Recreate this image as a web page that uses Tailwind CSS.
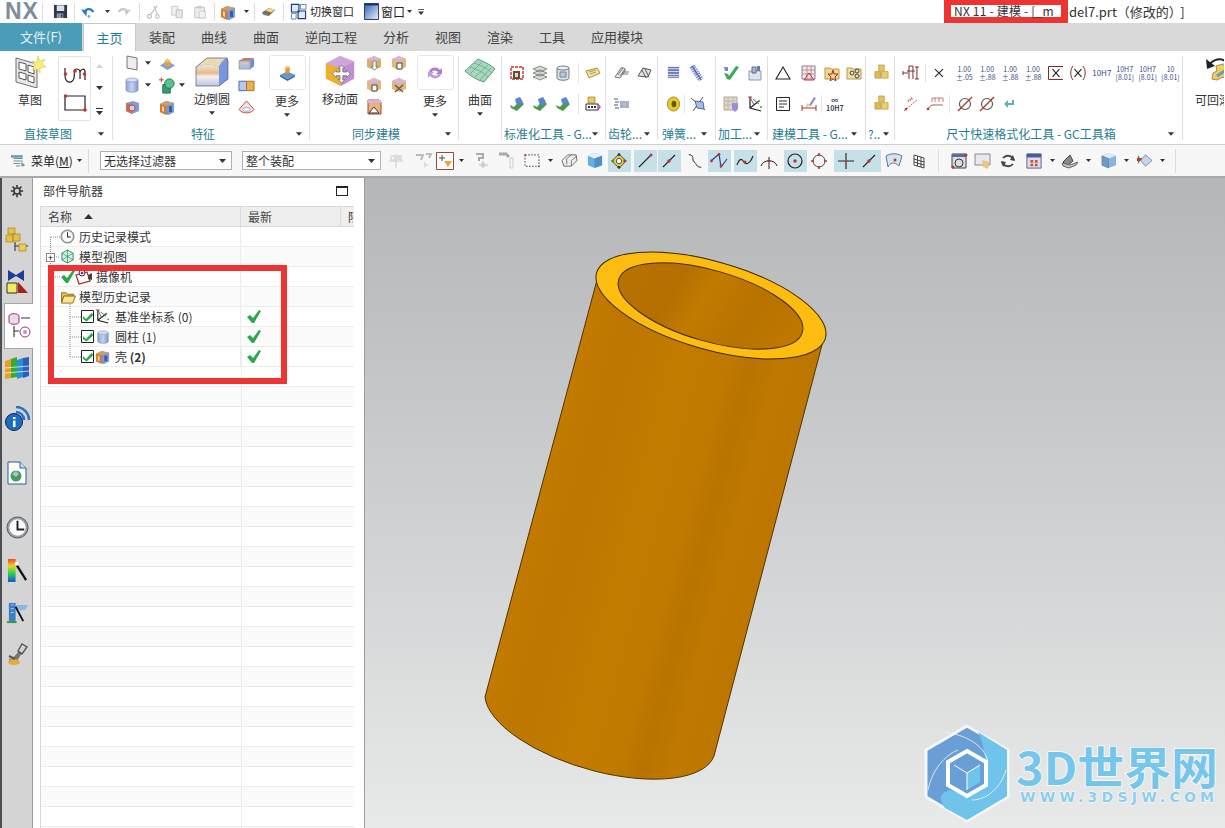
<!DOCTYPE html>
<html lang="zh-CN">
<head>
<meta charset="UTF-8">
<title>NX 11 - 建模</title>
<script src="https://cdn.jsdelivr.net/npm/@tailwindcss/browser@4"></script>
</head>
<body class="w-[1225px] h-[828px] overflow-hidden bg-white text-[12px] text-[#333] font-['Noto_Sans_CJK_SC','Microsoft_YaHei',sans-serif]">

<!-- icon sheet -->
<svg width="0" height="0" class="absolute">
  <defs>
    <linearGradient id="gBlue" x1="0" x2="1"><stop offset="0" stop-color="#8fa6d8"/><stop offset=".5" stop-color="#c6d3ee"/><stop offset="1" stop-color="#7f96cc"/></linearGradient>
    <linearGradient id="gWin" x1="0" y1="0" x2="1" y2="1"><stop offset="0" stop-color="#2f5fb0"/><stop offset="1" stop-color="#eef3fb"/></linearGradient>
    <linearGradient id="gHeat" x1="0" y1="0" x2="0" y2="1"><stop offset="0" stop-color="#e8452c"/><stop offset=".3" stop-color="#f1d21e"/><stop offset=".6" stop-color="#2ed84a"/><stop offset="1" stop-color="#1450d8"/></linearGradient>
    <linearGradient id="gFace" x1="0" y1="0" x2="0" y2="1"><stop offset="0" stop-color="#efe6da"/><stop offset=".4" stop-color="#e9b98a"/><stop offset=".55" stop-color="#f4f0ea"/><stop offset="1" stop-color="#b8c6e8"/></linearGradient>
    <linearGradient id="gBody" gradientUnits="userSpaceOnUse" x1="597" y1="283" x2="823" y2="343">
      <stop offset="0" stop-color="#c27a00"/><stop offset=".18" stop-color="#bd7600"/><stop offset=".3" stop-color="#c07900"/>
      <stop offset=".42" stop-color="#c37c00"/><stop offset=".62" stop-color="#c17a00"/><stop offset=".72" stop-color="#b87300"/>
      <stop offset=".84" stop-color="#bf7900"/><stop offset="1" stop-color="#bd7700"/>
    </linearGradient>
    <linearGradient id="gBore" gradientUnits="userSpaceOnUse" x1="618" y1="280" x2="803" y2="330">
      <stop offset="0" stop-color="#b87200"/><stop offset=".3" stop-color="#b46f00"/><stop offset=".45" stop-color="#c27b00"/>
      <stop offset=".7" stop-color="#b87200"/><stop offset="1" stop-color="#c07800"/>
    </linearGradient>
  </defs>
  <symbol id="dn" viewBox="0 0 7 4"><path d="M0 0h7L3.5 4z" fill="#333"/></symbol>
  <symbol id="more" viewBox="0 0 7 7"><path d="M0 0h7v1H0z M0 3h7L3.5 7z" fill="#333"/></symbol>
  <symbol id="save" viewBox="0 0 16 16"><path d="M1 1h14v14H1z" fill="#2c3a4c"/><path d="M4 1.5h8v6H4z" fill="#dbe3ea"/><path d="M4 10h7v5H4z" fill="#8e99a6"/><path d="M8.500 11h1.500v3H8.500z" fill="#2c3a4c"/></symbol>
  <symbol id="undo" viewBox="0 0 16 16"><path d="M4 9C5 4 11 3 14 8" fill="none" stroke="#2a7cc9" stroke-width="2.600"/><path d="M0 4l7 1-1 7z" fill="#2a7cc9" transform="translate(0 1)"/><circle cx="9" cy="13" r="1.500" fill="#6aa8de"/></symbol>
  <symbol id="redo" viewBox="0 0 16 16"><path d="M12 9C11 4 5 3 2 8" fill="none" stroke="#c2c8cc" stroke-width="2.400"/><path d="M16 5l-7 1 1 6z" fill="#c2c8cc"/></symbol>
  <symbol id="cut" viewBox="0 0 16 16"><path d="M13 1L5 11M9 1l4 10" stroke="#c4c4c4" stroke-width="1.400" fill="none"/><circle cx="4" cy="13" r="2.200" fill="none" stroke="#b8b0a8" stroke-width="1.300"/><circle cx="13" cy="13" r="2" fill="none" stroke="#c8c0b8" stroke-width="1.200"/></symbol>
  <symbol id="copy" viewBox="0 0 16 16"><path d="M2 1.500h7v10H2z" fill="#f2f2f2" stroke="#c4c4c4"/><path d="M7 5.500h7v9H7z" fill="#e8e8e8" stroke="#bcbcbc"/></symbol>
  <symbol id="paste" viewBox="0 0 16 16"><path d="M2 2.500h11v12H2z" fill="#eee" stroke="#bdbdbd"/><path d="M5 1h5v3H5z" fill="#ccc"/><path d="M7 7h7v8H7z" fill="#f4f4f4" stroke="#c4c4c4"/></symbol>
  <symbol id="shell" viewBox="0 0 16 16"><path d="M1 5l6-3 8 2v9l-6 3-8-3z" fill="#6d8ed0"/><path d="M1 5l6 2v9l-6-3z" fill="#d97b2c"/><path d="M3 7l2 1v5l-2-1z" fill="#f6d08f"/><path d="M7 7l8-3v9l-6 3z" fill="#7e9bd6"/><path d="M10 7h3v6h-3z" fill="#3c5a9c"/><path d="M1 5l6-3 8 2-8 3z" fill="#c9a06a"/></symbol>
  <symbol id="brush" viewBox="0 0 18 12"><path d="M1 7l8-5 7 2-7 7z" fill="#8a6a3a"/><path d="M5 5l5-3 6 2-5 3z" fill="#efd691"/><path d="M1 7l5 1 3 3-6-1z" fill="#5878b4"/></symbol>
  <symbol id="switch" viewBox="0 0 18 18"><path d="M1.500 1.500h8v8h-8z M8.500 8.500h8v8h-8z" fill="#dfe9f7" stroke="#1c3c74" stroke-width="1.200"/><path d="M11 1.500h6v5h-6z M1.500 11h5v6h-5z" fill="#fff" stroke="#5a7fb8"/></symbol>
  <symbol id="win" viewBox="0 0 16 18"><path d="M.500.500h15v17H.500z" fill="url(#gWin)" stroke="#16366f"/><path d="M.500.500h15v2H.500z" fill="#16366f"/></symbol>

  <symbol id="sketch" viewBox="0 0 32 32"><path d="M2 2l21 6v24L2 26z" fill="#e8e8e8" stroke="#6c6c6c"/><path d="M5 6l7 2v7l-7-2zM14 9l6 2v7l-6-2zM5 16l7 2v6l-7-2zM14 19l6 2v6l-6-2z" fill="#fff" stroke="#555"/><path d="M24 0l2 5 5-2-3 5 4 3-6 1 0 5-3-4-5 1 3-5-3-4 5 1z" fill="#f8ee80" stroke="#d4c84a" stroke-width=".600"/></symbol>
  <symbol id="curve" viewBox="0 0 24 20"><path d="M2 4v7c0 9 8 9 9 3s-1-9 3-9 3 5 3 10M17 8c1-3 4-4 5-1v9" fill="none" stroke="#222" stroke-width="1.200"/><circle cx="2.500" cy="10" r="1.800" fill="#c8322c"/><circle cx="12" cy="7" r="1.800" fill="#c8322c"/><circle cx="21.500" cy="10" r="1.800" fill="#c8322c"/></symbol>
  <symbol id="rect2" viewBox="0 0 24 20"><path d="M2 3h20v14H2z" fill="none" stroke="#222" stroke-width="1.200"/><circle cx="2.500" cy="3" r="1.800" fill="#c8322c"/><circle cx="22" cy="17" r="1.800" fill="#c8322c"/></symbol>
  <symbol id="plane" viewBox="0 0 16 16"><path d="M3 1l10 2v12L3 13z" fill="#eee" stroke="#777"/></symbol>
  <symbol id="cyl" viewBox="0 0 16 16"><path d="M2 3v10c0 3 12 3 12 0V3z" fill="url(#gBlue)" stroke="#7288bd" stroke-width=".600"/><ellipse cx="8" cy="3" rx="6" ry="2" fill="#d7e0f2" stroke="#7288bd" stroke-width=".600"/></symbol>
  <symbol id="bump" viewBox="0 0 18 16"><path d="M1 10l8-5 8 5-8 5z" fill="#7fa0d8"/><path d="M6 5h6v5l-3 2-3-2z" fill="#e8a23c"/><path d="M6 5l3-3 3 3-3 2z" fill="#f2c76e"/></symbol>
  <symbol id="block" viewBox="0 0 16 16"><path d="M2 4l7-2 6 2v8l-7 3-6-3z" fill="#7f9ad4"/><path d="M2 4l6 2v9l-6-3z" fill="#d46a4c"/><circle cx="8" cy="9" r="3" fill="#c9d4ec" stroke="#c64c3c"/></symbol>
  <symbol id="plus" viewBox="0 0 18 18"><path d="M0 3h5M2.500 .5v5" stroke="#c8322c"/><path d="M4 8h8v9H4z" fill="#3d9c6d" stroke="#175"/><circle cx="11" cy="7" r="5" fill="#5fc08e" stroke="#175"/></symbol>
  <symbol id="edge" viewBox="0 0 34 32"><path d="M1 12L12 3h20l1 3v18L24 31H1z" fill="#6f8fdc"/><path d="M1 12c6-3 18-3 23 0v19H1z" fill="url(#gFace)"/><path d="M1 12L12 3h20c-4 2-7 6-8 9-5-3-17-3-23 0z" fill="#e7dcb4"/><path d="M24 12c1-3 4-7 8-9l1 3v18l-9 7z" fill="#7895e0"/><path d="M1 12L12 3h20l1 3v18l-9 7H1z" fill="none" stroke="#5a5a70" stroke-width=".700"/></symbol>
  <symbol id="chamf" viewBox="0 0 18 16"><path d="M1 5l5-3h11l-4 3z" fill="#c87a68"/><path d="M1 5h12v9H1z" fill="#a8c0e4" stroke="#8d6a5a" stroke-width=".500"/><path d="M13 5l4-3v9l-4 3z" fill="#6f8fcc"/><path d="M3 7h8v2H3z" fill="#e9c8a0"/></symbol>
  <symbol id="halves" viewBox="0 0 18 14"><path d="M1 3h8v10H1z" fill="#b7c9ea" stroke="#4a62a0"/><path d="M9 3h8v10H9z" fill="#eab24e" stroke="#a8702c"/></symbol>
  <symbol id="cone" viewBox="0 0 18 16"><path d="M9 1l8 9c-3 5-13 5-16 0z" fill="#f4e3e0" stroke="#c0473c"/><ellipse cx="9" cy="10" rx="4" ry="2" fill="#fff" stroke="#8ea2cf"/></symbol>
  <symbol id="morebox" viewBox="0 0 16 16"><path d="M1 10l7-3 7 3-7 4z" fill="#6a94c8"/><path d="M1 10v2l7 4 7-4v-2l-7 4z" fill="#3d6ca4"/><path d="M6 3h4v6H6z" fill="#e8962c"/><ellipse cx="8" cy="3" rx="2" ry="1.200" fill="#f4c46c"/></symbol>
  <symbol id="moveface" viewBox="0 0 34 34"><path d="M17 1l15 6v18l-14 8L2 25V9z" fill="#e8b43c"/><path d="M17 1l15 6-14 7L2 9z" fill="#d0a4dc"/><path d="M18 14l14-7v18l-14 8z" fill="#c08fd8"/><path d="M2 9l16 5v19L2 25z" fill="#eab02e"/><path d="M19 11l3 3h-2v4h4v-2l4 4-4 4v-2h-4v4h2l-3 4-4-4h2v-4h-4v2l-4-4 4-4v2h4v-4h-2z" fill="#fff" stroke="#777"/></symbol>
  <symbol id="mf1" viewBox="0 0 16 16"><path d="M8 1l7 3v8l-7 3-7-3V4z" fill="#d8b06a"/><path d="M8 1l7 3-7 3-7-3z" fill="#d9b2de"/><path d="M7 6h3v6h2l-3.500 3L5 12h2z" fill="#fff" stroke="#555" stroke-width=".600"/></symbol>
  <symbol id="mf2" viewBox="0 0 16 16"><path d="M8 1l7 3v8l-7 3-7-3V4z" fill="#e0b878"/><path d="M8 1l7 3-7 3-7-3z" fill="#d9b2de"/><path d="M6 8h5v6H6z" fill="#fff" stroke="#444"/></symbol>
  <symbol id="mf3" viewBox="0 0 16 16"><path d="M8 1l7 3v8l-7 3-7-3V4z" fill="#e0b878"/><path d="M8 1l7 3-7 3-7-3z" fill="#d9b2de"/><path d="M4 8l8 7M12 8l-8 7" stroke="#555" stroke-width="1.200"/></symbol>
  <symbol id="mf4" viewBox="0 0 16 16"><path d="M2 1h11l2 2v12H2z" fill="#e8b47c" stroke="#a4462c"/><path d="M2 1h13v3H2z" fill="#d9b2de"/><path d="M8 8l5 6H3z" fill="#fff" stroke="#333"/></symbol>
  <symbol id="refresh" viewBox="0 0 16 16"><path d="M2 7c1-5 8-6 11-2l2-2v6H9l2-2C9 5 6 5 5 7z" fill="#a87fd0"/><path d="M14 9c-1 5-8 6-11 2l-2 2V7h6L5 9c2 2 5 2 6 0z" fill="#c29ce0"/></symbol>
  <symbol id="surf" viewBox="0 0 32 26"><path d="M1 13L14 1c6 3 12 5 17 10L20 24C13 22 6 18 1 13z" fill="#a8d8bc" stroke="#5a9a80"/><path d="M6 9c7 2 14 6 18 10M10 5c7 2 14 6 18 10M6 16L19 3M11 19L24 7M16 22L27 10" fill="none" stroke="#5f9f86" stroke-width=".700"/></symbol>
  <symbol id="frame" viewBox="0 0 16 16"><path d="M2 2h12v12H2z" fill="none" stroke="#c0322c" stroke-dasharray="3 1" stroke-width="1.400"/><path d="M4 6h7v8H4z" fill="#6b4a3a"/><path d="M6 8h3v4H6z" fill="#e8d8c8"/></symbol>
  <symbol id="layers" viewBox="0 0 16 16"><path d="M1 4l7-3 7 3-7 3zM1 8l7-3 7 3-7 3zM1 12l7-3 7 3-7 3z" fill="#d6d6d6" stroke="#5a6a5a" stroke-width=".700"/></symbol>
  <symbol id="db" viewBox="0 0 16 16"><path d="M2 3v10c0 3 12 3 12 0V3z" fill="#d8dee6" stroke="#6f7f80"/><ellipse cx="8" cy="3" rx="6" ry="2" fill="#eee" stroke="#6f7f80"/><path d="M5 7h6v5H5z" fill="#b4c8dc" stroke="#789"/></symbol>
  <symbol id="tag" viewBox="0 0 16 12"><path d="M1 4l11-3 3 5-11 5z" fill="#f2e4a8" stroke="#a88a3c"/><path d="M4 5l7-2M5 7l6-2" stroke="#b89a4c"/></symbol>
  <symbol id="gchk" viewBox="0 0 16 16"><path d="M1 9l4 2 6-7 4 4-7 7-6-3z" fill="#4a9a4a"/><path d="M6 3l5-2 3 5-4 4-3-3z" fill="#5a86d0"/></symbol>
  <symbol id="std4" viewBox="0 0 16 16"><path d="M3 1h7v6H3z" fill="#e8c868" stroke="#a08428" stroke-width=".700"/><path d="M1 8h12v6H1z" fill="#fff" stroke="#333"/><path d="M3 10h2v2H3zM6 10h2v2H6zM9 10h2v2H9z" fill="#333"/><path d="M13 7l3 4-3 4z" fill="#b060c8"/></symbol>
  <symbol id="gear1" viewBox="0 0 16 14"><path d="M1 11L7 2c3-1 5 1 4 3l-5 7zM4 9l5-7M6 10l5-7M9 6h6M8 8h6" fill="#eee" stroke="#666" stroke-width=".900"/></symbol>
  <symbol id="gear2" viewBox="0 0 16 14"><path d="M1 10L6 2l8 2-3 7z" fill="#e4e4e4" stroke="#555"/><path d="M5 4l4 8M8 3l4 8" stroke="#555"/></symbol>
  <symbol id="gear3" viewBox="0 0 16 14"><path d="M0 2h4M1 5h4M0 8h4M1 11h4" stroke="#555"/><path d="M6 4h9v7H6z" fill="#9fb1e0"/><path d="M9 6h3v3H9z" fill="#e8b868"/></symbol>
  <symbol id="spring" viewBox="0 0 16 16"><path d="M2 2h12v12H2z" fill="#6878b8"/><path d="M2 4h12M2 7h12M2 10h12M2 12.500h12" stroke="#e0e4f4"/></symbol>
  <symbol id="spring2" viewBox="0 0 16 16"><path d="M4 1l9 14" stroke="#8090d0" stroke-width="6" stroke-dasharray="1.500 .8"/><path d="M4 1l9 14" stroke="#3a4a90" stroke-width="1"/></symbol>
  <symbol id="coil" viewBox="0 0 16 16"><ellipse cx="8" cy="8" rx="6.500" ry="7.500" fill="#e8c830" stroke="#a08a20"/><ellipse cx="8.500" cy="8" rx="2.500" ry="3.500" fill="#6a5a18"/></symbol>
  <symbol id="xcoil" viewBox="0 0 16 16"><path d="M1 2l14 12M13 1L3 15" stroke="#555"/><path d="M5 5l8 1 1 7-7-1z" fill="#a8bce4" stroke="#4a68ac"/></symbol>
  <symbol id="mchk" viewBox="0 0 16 16"><path d="M1 8l4 1 1 2 7-10 3 1-9 13-3-1z" fill="#3aa85a"/><path d="M1 2l4 0 0 4-3 0z" fill="#7a84c8"/></symbol>
  <symbol id="mbox" viewBox="0 0 16 16"><path d="M2 6h12v9H2z" fill="#dce4f0" stroke="#8a9ab8"/><path d="M5 2h4v6H5z" fill="#a8b8d8" stroke="#667"/><path d="M10 1h3v5h-3z" fill="#6878b0"/></symbol>
  <symbol id="mgrid" viewBox="0 0 16 16"><path d="M1 1h13v13H1z" fill="#ded8c8" stroke="#b4a888"/><path d="M1 5h13M1 9h13M5 1v13M10 1v13" stroke="#c0b8a8"/><path d="M9 7h6v6l-3 3-3-3z" fill="#9a8ce0"/></symbol>
  <symbol id="csys" viewBox="0 0 16 16"><path d="M3 1v11l11 3M3 12l9-7" fill="none" stroke="#222" stroke-width="1.200"/><path d="M3 1l4 8M6 3l6 5" fill="none" stroke="#666"/><circle cx="12" cy="5" r="1" fill="#39a839"/><circle cx="14" cy="11" r="1" fill="#39a839"/><path d="M1 1h4" stroke="#c0322c"/></symbol>
  <symbol id="tri" viewBox="0 0 16 16"><path d="M8 2l7 12H1z" fill="#fff" stroke="#222" stroke-width="1.100"/></symbol>
  <symbol id="tbl" viewBox="0 0 16 16"><path d="M1 1h13v13H1z" fill="#eee" stroke="#8a7a9a"/><path d="M1 5h13M1 9h13M6 1v13M10 1v13" stroke="#c88"/><path d="M8 8l5 7H3z" fill="none" stroke="#c0322c"/></symbol>
  <symbol id="fstar" viewBox="0 0 16 16"><path d="M1 3h5l1 1h8v10H1z" fill="#f0d890" stroke="#b89a4a"/><path d="M9 5l1 4 4 0-3 3 1 4-3-2-3 2 1-4-3-3 4 0z" fill="none" stroke="#a4341c"/></symbol>
  <symbol id="fgear" viewBox="0 0 16 16"><path d="M1 3h5l1 1h8v10H1z" fill="#f0e0a8" stroke="#b89a4a"/><circle cx="6" cy="8" r="2" fill="none" stroke="#444"/><circle cx="11" cy="11" r="2" fill="none" stroke="#444"/><circle cx="11" cy="6" r="2" fill="none" stroke="#444"/></symbol>
  <symbol id="note" viewBox="0 0 16 16"><path d="M1.500 1.500h13v13h-13z" fill="#fff" stroke="#222"/><path d="M4 5h8M4 8h8M4 11h5" stroke="#333"/></symbol>
  <symbol id="dimbrush" viewBox="0 0 16 16"><path d="M1 9v6M15 9v6M1 12h14" stroke="#a8342c"/><path d="M8 9L13 1l2 1-5 8z" fill="#9a8ac8"/><path d="M6 7l3 3-4 1z" fill="#e8c878"/></symbol>
  <symbol id="cubes" viewBox="0 0 18 18"><path d="M6 1h6v6H6z" fill="#e8c060" stroke="#a88a30" stroke-width=".600"/><path d="M2 8h6v7H2z" fill="#e4b850" stroke="#a88a30" stroke-width=".600"/><path d="M9 8h7v7H9z" fill="#f0cc70" stroke="#a88a30" stroke-width=".600"/></symbol>
  <symbol id="dim1" viewBox="0 0 18 16"><path d="M7 6V1h4v5M5 6h8M1 6v4M1 8h5M15 2v12M13 2h4M13 14h4M7 6v8M11 6v8" fill="none" stroke="#7a2a2a"/></symbol>
  <symbol id="bigx" viewBox="0 0 12 12"><path d="M2 2l8 8M10 2l-8 8" stroke="#222" stroke-width="1.100"/></symbol>
  <symbol id="boxx" viewBox="0 0 16 14"><path d="M.5.5h15v13H.5z" fill="none" stroke="#7a2a2a"/><path d="M4.500 3l7 8M11.500 3l-7 8" stroke="#222" stroke-width="1.100"/></symbol>
  <symbol id="parx" viewBox="0 0 18 16"><path d="M4 1C1 5 1 11 4 15M14 1c3 4 3 10 0 14" fill="none" stroke="#7a2a2a"/><path d="M5.500 4l7 8M12.500 4l-7 8" stroke="#222" stroke-width="1.100"/></symbol>
  <symbol id="slash1" viewBox="0 0 18 16"><path d="M2 15L15 4" stroke="#b45a5a" stroke-dasharray="2 1"/><circle cx="4" cy="13" r="1.300" fill="#c8322c"/><path d="M6 5l5-3" stroke="#a44" stroke-dasharray="1 1" stroke-width="2"/></symbol>
  <symbol id="slash2" viewBox="0 0 18 16"><path d="M1 13l5-4h11" stroke="#b45a5a" fill="none"/><circle cx="2" cy="13" r="1.300" fill="#c8322c"/><path d="M6 6V2h11v4M9 2v4M13 2v4" fill="none" stroke="#a44" stroke-width=".700"/></symbol>
  <symbol id="dia" viewBox="0 0 16 16"><circle cx="8" cy="8" r="5.500" fill="none" stroke="#555" stroke-width="1.100"/><path d="M1 15L15 1" stroke="#a8342c" stroke-width="1.200"/></symbol>
  <symbol id="back" viewBox="0 0 12 10"><path d="M11 1v5H5v3L1 5l4-4v3h4V1z" fill="#58b4b0"/></symbol>
  <symbol id="rollback" viewBox="0 0 32 32"><path d="M6 12C6 5 16 1 22 5" fill="none" stroke="#222" stroke-width="2"/><path d="M3 3l1 10 8-3z" fill="#222"/><path d="M20 8l5 2-1 5 6 7-3 5-7-6-6 3-5-1 1-6 4-2-1-5z" fill="#f0cc68" stroke="#a88a3c"/><path d="M14 20l9-6" stroke="#68a0a8" stroke-width="3"/></symbol>

  <symbol id="menu" viewBox="0 0 18 16"><path d="M0 1h14v3H0z" fill="#6a9ab0"/><path d="M3 5h11M3 8h11M3 11h8M6 14h5" stroke="#4a7a90"/><path d="M12 9l5 4-4 2z" fill="#888"/></symbol>
  <symbol id="gp1" viewBox="0 0 18 18"><path d="M2 9h14M9 2v14M4 4h4v4H4z" fill="none" stroke="#ccc"/><path d="M10 3h5v5h-5z" fill="#ddd"/></symbol>
  <symbol id="gp2" viewBox="0 0 18 18"><path d="M1 3h7l-2 5M11 2h5l-2 4" fill="none" stroke="#bbb" stroke-width="2"/><path d="M9 9v7l2-2h3z" fill="#ddd"/></symbol>
  <symbol id="selbox" viewBox="0 0 18 18"><path d="M.5.5h17v17H.5z" fill="#fff" stroke="#a0433c"/><path d="M6 3v6M3 6h6" stroke="#444"/><path d="M8 9h8l-4 6z" fill="#eda63c"/></symbol>
  <symbol id="gp3" viewBox="0 0 18 18"><path d="M2 2h7v4H5v3" fill="none" stroke="#aaa" stroke-width="2"/><path d="M9 9v7M5 13h9" stroke="#bbb"/><circle cx="9" cy="13" r="2" fill="none" stroke="#ccc"/></symbol>
  <symbol id="gp4" viewBox="0 0 18 18"><path d="M1 2h7l3 3" fill="none" stroke="#aaa" stroke-width="3"/><path d="M12 6h3v10h-3z" fill="none" stroke="#ccc"/></symbol>
  <symbol id="dash" viewBox="0 0 18 16"><path d="M1 1h16v13H1z" fill="none" stroke="#444" stroke-dasharray="2 1.500"/><circle cx="1" cy="1" r="1" fill="#c0322c"/><circle cx="17" cy="14" r="1" fill="#c0322c"/></symbol>
  <symbol id="wire" viewBox="0 0 18 16"><path d="M1 8l6-6h9l1 6-6 6H3z" fill="#eee" stroke="#666"/><path d="M6 12V6l5-4M11 14V8l6-5" fill="none" stroke="#777"/></symbol>
  <symbol id="glass" viewBox="0 0 18 18"><path d="M2 4l7-3 8 3v10l-8 3-7-3z" fill="#6aaedc"/><path d="M2 4l7-3 8 3-8 3z" fill="#e8f2fa"/><path d="M9 7l8-3v10l-8 3z" fill="#4c90c8"/></symbol>
  <symbol id="snapall" viewBox="0 0 20 20"><path d="M10 2l8 8-8 8-8-8z" fill="#e8c848" stroke="#444"/><circle cx="10" cy="10" r="3" fill="#fff" stroke="#444"/><circle cx="10" cy="3" r="1.500" fill="#333"/><circle cx="10" cy="17" r="1.500" fill="#333"/><circle cx="3" cy="10" r="1.500" fill="#2a9a3a"/><path d="M15 8l4 2-4 2z" fill="#c0322c"/></symbol>
  <symbol id="lineA" viewBox="0 0 18 18"><path d="M3 15L15 3" stroke="#222" stroke-width="1.100"/><circle cx="15" cy="3" r="1.500" fill="#c0322c"/></symbol>
  <symbol id="lineM" viewBox="0 0 18 18"><path d="M3 15L15 3" stroke="#222" stroke-width="1.100"/><circle cx="9" cy="9" r="1.700" fill="#c0322c"/></symbol>
  <symbol id="scurve" viewBox="0 0 18 18"><path d="M2 2c7 0 3 6 6 8s2 6 8 6" fill="none" stroke="#222" stroke-width="1.100"/></symbol>
  <symbol id="poly" viewBox="0 0 18 18"><path d="M1 9L9 2l2 13 6-8" fill="none" stroke="#3a3a8a" stroke-width="1.200"/><circle cx="1.500" cy="9" r="1.400" fill="#c0322c"/><circle cx="9" cy="2.500" r="1.400" fill="#c0322c"/><circle cx="11" cy="14" r="1.400" fill="#c0322c"/></symbol>
  <symbol id="wave" viewBox="0 0 18 18"><path d="M1 13c3-8 5-6 7-3s6 2 9-6" fill="none" stroke="#222" stroke-width="1.100"/><circle cx="9" cy="10" r="1.500" fill="#c0322c"/></symbol>
  <symbol id="tang" viewBox="0 0 18 18"><path d="M1 14c2-7 14-7 16 0M9 5v12" fill="none" stroke="#222"/><path d="M7 9h4" stroke="#c0322c"/></symbol>
  <symbol id="circ" viewBox="0 0 18 18"><circle cx="9" cy="9" r="7" fill="none" stroke="#222" stroke-width="1.200"/><circle cx="9" cy="9" r="1.700" fill="#c0322c"/></symbol>
  <symbol id="circ2" viewBox="0 0 18 18"><circle cx="9" cy="9" r="6" fill="none" stroke="#444"/><path d="M9 1v3M9 14v3M1 9h3M14 9h3" stroke="#c0322c" stroke-width="1.600"/></symbol>
  <symbol id="cross" viewBox="0 0 18 18"><path d="M9 1v16M1 9h16" stroke="#222" stroke-width="1.100"/><circle cx="9" cy="9" r="1.300" fill="#c0322c"/></symbol>
  <symbol id="patch" viewBox="0 0 18 18"><path d="M1 4c5-3 11-3 16 0l-3 10C9 9 5 11 3 15z" fill="#d4e4f2" stroke="#5a7a9a"/><circle cx="10" cy="8" r="1.500" fill="#c0322c"/></symbol>
  <symbol id="grid3" viewBox="0 0 16 16"><path d="M3 2l10 3v10L3 12zM3 6l10 3M3 9l10 3M6.500 3v10M10 4v10" fill="#fff" stroke="#444"/></symbol>
  <symbol id="v1" viewBox="0 0 18 18"><path d="M2 2h14v14H2z" fill="#ddd" stroke="#445"/><path d="M2 2h14v3H2z" fill="#5a6a9a"/><circle cx="9" cy="11" r="4" fill="none" stroke="#335"/><circle cx="3" cy="15" r="1.500" fill="#c0322c"/><circle cx="16" cy="3" r="1.500" fill="#c0322c"/></symbol>
  <symbol id="v2" viewBox="0 0 18 18"><path d="M1 2h15v11H1z" fill="#e8e8f0" stroke="#889"/><path d="M8 8l7 2-1 7-5-2z" fill="#e8c878"/></symbol>
  <symbol id="v3" viewBox="0 0 18 18"><path d="M4 6a6.500 6.500 0 0 1 11 2M14 12a6.500 6.500 0 0 1-11-2" fill="none" stroke="#444" stroke-width="1.800"/><path d="M14 3l2 6-5-1zM4 15l-2-6 5 1z" fill="#444"/></symbol>
  <symbol id="v4" viewBox="0 0 18 18"><path d="M1 1h16v16H1z" fill="#d8dcec" stroke="#4a5a9a"/><path d="M1 1h16v4H1z" fill="#4a5a9a"/><path d="M5 8h3v3H5zM10 8h3v3h-3zM5 12h3v3H5zM10 12h3v3h-3z" fill="#d0542c"/></symbol>
  <symbol id="v5" viewBox="0 0 18 16"><path d="M2 9L9 2l3 6-6 5z" fill="#8a8a8a" stroke="#444"/><path d="M1 10l8 2 8-3-2 3-7 3-6-2z" fill="#c4c4c4" stroke="#666"/></symbol>
  <symbol id="v6" viewBox="0 0 18 18"><path d="M2 4l7-3 8 3v10l-8 3-7-3z" fill="#8ab4dc"/><path d="M2 4l7-3 8 3-8 3z" fill="#dcecf8"/><path d="M9 7v10l-7-3V4z" fill="#6a9cc8" stroke="#557" stroke-width=".400"/></symbol>
  <symbol id="v7" viewBox="0 0 18 18"><path d="M2 3l3 5-3 5" fill="#3a9a3a"/><path d="M1 8h6" stroke="#c0322c" stroke-width="3"/><path d="M10 3l7 6-7 6-5-6z" fill="#c8d4ec" stroke="#7a8ab0"/></symbol>

  <symbol id="gearS" viewBox="0 0 16 16"><circle cx="8" cy="8" r="3.500" fill="none" stroke="#333" stroke-width="1.800"/><path d="M8 1v3M8 12v3M1 8h3M12 8h3M3 3l2 2M11 11l2 2M13 3l-2 2M5 11l-2 2" stroke="#333" stroke-width="1.800"/></symbol>
  <symbol id="navA" viewBox="0 0 24 26"><path d="M3 1h7v6H3zM1 8h7v7H1zM8 7h7v7H8z" fill="#e8c048" stroke="#a08428" stroke-width=".700"/><path d="M10 15v9M10 19h13" stroke="#333" stroke-width="1.100"/><path d="M14 17h7v7h-7z" fill="#f0cc50" stroke="#a08428" stroke-width=".700"/></symbol>
  <symbol id="navB" viewBox="0 0 24 26"><path d="M3 1l8 5 8-5v11l-8-5-8 5z" fill="#1c3c9c"/><path d="M2 14h10v10H2z" fill="#f2ec60" stroke="#333"/><path d="M13 24l10 0-10-11z" fill="#a82020"/></symbol>
  <symbol id="navC" viewBox="0 0 24 26"><path d="M2 3c0-3 10-3 10 0v6c0 3-10 3-10 0z" fill="#f0d8e8" stroke="#8c3a80"/><path d="M14 5h9M7 13v11M7 18h5" stroke="#333" stroke-width="1.100"/><circle cx="18" cy="19" r="5" fill="none" stroke="#8c3a80"/><circle cx="18" cy="19" r="2" fill="#c48cc0"/></symbol>
  <symbol id="navD" viewBox="0 0 26 24"><path d="M1 5l6-2v19l-6 1z" fill="#e8a020"/><path d="M7 3l6-2v20l-6 1z" fill="#3aa83a"/><path d="M13 4l6-2v19l-6 2z" fill="#2a90d8"/><path d="M19 2l6-1v19l-6 2z" fill="#2a60b8"/><path d="M1 12l24-2M1 17l24-2" stroke="#fff" stroke-width=".700"/></symbol>
  <symbol id="navE" viewBox="0 0 26 26"><path d="M12 6a8 8 0 0 1 8 8M12 1a13 13 0 0 1 13 13" fill="none" stroke="#2a70c0" stroke-width="2.600"/><circle cx="10" cy="16" r="8.500" fill="#1c6cc0" stroke="#125"/><path d="M9 11h2.500v2H9zM9 14.500h2.500V21H9z" fill="#fff"/></symbol>
  <symbol id="navF" viewBox="0 0 20 24"><path d="M1 1h12l6 6v16H1z" fill="#fff" stroke="#2a5aa0"/><path d="M13 1v6h6" fill="#cfe0f0" stroke="#2a5aa0"/><circle cx="9" cy="15" r="5.500" fill="#4a9a5a"/><path d="M5 13l4-3 3 3-3 3z" fill="#9ac8d8"/></symbol>
  <symbol id="navG" viewBox="0 0 24 24"><circle cx="12" cy="12" r="11" fill="#9aa0a8" stroke="#555"/><circle cx="12" cy="12" r="8.500" fill="#fafcff"/><path d="M11 5h2v8h6v2h-8z" fill="#222"/></symbol>
  <symbol id="navH" viewBox="0 0 22 26"><path d="M1 1h8v24H1z" fill="url(#gHeat)"/><path d="M10 7l10 16" stroke="#111" stroke-width="2.400"/><circle cx="10" cy="6" r="2" fill="#fff"/></symbol>
  <symbol id="navI" viewBox="0 0 24 24"><path d="M3 1h7v20H3z" fill="#3a80c8"/><path d="M5 3h3M5 7h3M5 11h3" stroke="#a8d0f0"/><path d="M10 3l13 0-3 5-6 1z" fill="#8ab8e4"/><path d="M10 5l8 15" stroke="#111" stroke-width="2"/><path d="M1 21h10" stroke="#3a9a3a" stroke-width="2"/></symbol>
  <symbol id="navJ" viewBox="0 0 22 24"><path d="M3 21l8-2 5-8-3-2-6 7-4 1z" fill="#777"/><path d="M12 9l4-7 5 3-5 7z" fill="none" stroke="#555" stroke-width="1.400"/><ellipse cx="8" cy="20" rx="6" ry="3" fill="#e8a83c"/><path d="M3 14l6 3" stroke="#555" stroke-width="2"/></symbol>

  <symbol id="clock" viewBox="0 0 16 16"><circle cx="8" cy="8" r="7" fill="#b4bac0" stroke="#555" stroke-width=".700"/><circle cx="8" cy="8" r="5.500" fill="#fafafa"/><path d="M7.500 3.500h1v4.500h3v1h-4z" fill="#222"/></symbol>
  <symbol id="mview" viewBox="0 0 16 16"><path d="M8 1l6 3.500v7L8 15l-6-3.500v-7z" fill="#d4f0e0" stroke="#2a8a6a"/><path d="M8 1v14M2 4.500l12 7M14 4.500l-12 7" stroke="#2a8a6a" stroke-width=".700"/></symbol>
  <symbol id="camera" viewBox="0 0 18 16"><path d="M1 6l11-3 3 9-11 3z" fill="#fff" stroke="#a4241c" stroke-width="1.200"/><circle cx="7" cy="4" r="3" fill="#ddd" stroke="#4a2a6a"/><circle cx="7" cy="4" r="1" fill="#223"/><path d="M13 6l4-2v7l-4-1z" fill="#444"/></symbol>
  <symbol id="folder" viewBox="0 0 16 14"><path d="M.5 2.500h5l1 1.500h7v2H3L.5 12.500z" fill="#f2c850" stroke="#8a6a20"/><path d="M3 6h12.500l-3 7.500H.5z" fill="#fbe58c" stroke="#8a6a20"/></symbol>
  <symbol id="box" viewBox="0 0 13 13"><path d="M.5.5h12v12H.5z" fill="#fff" stroke="#222"/><path d="M2 6l3 3 6-6.500 1 3-6.500 6L2 9z" fill="#27a845"/></symbol>
  <symbol id="tick" viewBox="0 0 14 13"><path d="M0 7l3-2 3 3 6-8 2 1-7 12H5z" fill="#2ba84c"/></symbol>
</svg>

<!-- title bar -->
<header class="relative h-[23px] flex items-center bg-white">
  <span class="w-[42px] pl-[5px] text-[23px] leading-none font-bold tracking-[1px] text-[#7f8c99] font-['Liberation_Sans',sans-serif]">NX</span>
  <i class="w-px h-[18px] bg-[#ddd]"></i>
  <span class="ml-[10px]"><svg width="15" height="15"><use href="#save"/></svg></span>
  <i class="ml-[6px] w-px h-[18px] bg-[#ddd]"></i>
  <span class="ml-[6px]"><svg width="14" height="14"><use href="#undo"/></svg></span>
  <span class="ml-[10px]"><svg width="5" height="3"><use href="#dn"/></svg></span>
  <span class="ml-[7px]"><svg width="14" height="14"><use href="#redo"/></svg></span>
  <i class="ml-[8px] w-px h-[18px] bg-[#ddd]"></i>
  <span class="ml-[6px]"><svg width="14" height="14"><use href="#cut"/></svg></span>
  <span class="ml-[10px]"><svg width="14" height="14"><use href="#copy"/></svg></span>
  <span class="ml-[9px]"><svg width="14" height="14"><use href="#paste"/></svg></span>
  <i class="ml-[7px] w-px h-[18px] bg-[#ddd]"></i>
  <span class="ml-[5px]"><svg width="16" height="16"><use href="#shell"/></svg></span>
  <span class="ml-[8px]"><svg width="5" height="3"><use href="#dn"/></svg></span>
  <i class="ml-[5px] w-px h-[18px] bg-[#ddd]"></i>
  <span class="ml-[6px]"><svg width="16" height="11"><use href="#brush"/></svg></span>
  <i class="ml-[6px] w-px h-[18px] bg-[#ddd]"></i>
  <span class="ml-[6px]"><svg width="17" height="17"><use href="#switch"/></svg></span>
  <span class="ml-[3px] w-[44px] text-[11px] text-[#222] whitespace-nowrap">切换窗口</span>
  <span class="ml-[10px]"><svg width="15" height="17"><use href="#win"/></svg></span>
  <span class="ml-[2px] text-[#222]">窗口</span>
  <span class="ml-[2px]"><svg width="5" height="3"><use href="#dn"/></svg></span>
  <span class="ml-[6px]"><svg width="6" height="6"><use href="#more"/></svg></span>
  <div class="ml-[520px] w-[124px] h-[23px] px-[7px] pt-[5px] pb-[6px] bg-[#ee3333] flex items-center">
    <span class="w-[110px] h-[12px] pl-[3px] bg-white flex items-center text-[12px] tracking-[.2px] text-[#333] leading-[12px] whitespace-nowrap">NX 11 - 建模 - [_m</span>
  </div>
  <span class="ml-px text-[13px] whitespace-nowrap text-[#333]">del7.prt（修改的）<span class="ml-[5px]">]</span></span>
</header>

<!-- tabs -->
<nav class="h-[28px] flex bg-[#d9d9d9] text-[13px] text-[#444] leading-[28px]">
  <span class="w-[82px] bg-[#4b9cb7] text-[#e8f6fa] text-center">文件(F)</span>
  <span class="ml-px w-[53px] bg-white text-[#1a7c96] text-center border-t border-x border-[#c8c8c8]">主页</span>
  <span class="w-[52px] text-center">装配</span>
  <span class="w-[52px] text-center">曲线</span>
  <span class="w-[52px] text-center">曲面</span>
  <span class="w-[78px] text-center">逆向工程</span>
  <span class="w-[52px] text-center">分析</span>
  <span class="w-[52px] text-center">视图</span>
  <span class="w-[52px] text-center">渲染</span>
  <span class="w-[52px] text-center">工具</span>
  <span class="w-[78px] text-center">应用模块</span>
</nav>

<!-- ribbon -->
<section class="h-[94px] flex bg-white border-b border-[#cfcfcf] overflow-hidden">
  <!-- 直接草图 -->
  <div class="w-[112px] shrink-0 flex flex-col">
    <div class="h-[74px] flex">
      <div class="w-[58px] flex flex-col items-center pl-[2px] pt-[5px]">
        <svg width="32" height="32"><use href="#sketch"/></svg>
        <span class="mt-[2px] leading-[20px]">草图</span>
      </div>
      <div class="mt-[5px] w-[33px] h-[65px] border border-[#e4e4e4] rounded-[2px] flex flex-col items-center justify-around py-[2px]">
        <svg width="24" height="20"><use href="#curve"/></svg>
        <svg width="24" height="20"><use href="#rect2"/></svg>
      </div>
      <div class="ml-[5px] w-[7px] flex flex-col items-center pt-[13px] gap-[18px]">
        <svg width="7" height="4" class="rotate-180 opacity-20"><use href="#dn"/></svg>
        <svg width="7" height="4"><use href="#dn"/></svg>
        <svg width="7" height="7"><use href="#more"/></svg>
      </div>
    </div>
    <div class="h-[20px] flex items-center text-[#1f7d92]">
      <span class="w-[96px] text-center">直接草图</span>
      <svg width="6" height="4" class="ml-[2px]"><use href="#dn"/></svg>
    </div>
  </div>
  <i class="w-px h-[84px] mt-[5px] bg-[#e0e0e0]"></i>
  <!-- 特征 -->
  <div class="w-[196px] shrink-0 flex flex-col">
    <div class="h-[74px] flex pt-px">
      <div class="ml-[11px] w-[17px] flex flex-col">
        <span class="h-[22px] flex items-center"><svg width="16" height="16"><use href="#plane"/></svg></span>
        <span class="h-[22px] flex items-center"><svg width="16" height="16"><use href="#cyl"/></svg></span>
        <span class="h-[22px] flex items-center"><svg width="16" height="16"><use href="#block"/></svg></span>
      </div>
      <div class="ml-[4px] w-[7px] flex flex-col">
        <span class="h-[22px] flex items-center"><svg width="6" height="4"><use href="#dn"/></svg></span>
        <span class="h-[22px] flex items-center"><svg width="6" height="4"><use href="#dn"/></svg></span>
      </div>
      <div class="ml-[7px] w-[18px] flex flex-col">
        <span class="h-[22px] flex items-center"><svg width="17" height="15"><use href="#bump"/></svg></span>
        <span class="h-[22px] flex items-center"><svg width="17" height="17"><use href="#plus"/></svg></span>
        <span class="h-[22px] flex items-center"><svg width="16" height="16"><use href="#shell"/></svg></span>
      </div>
      <div class="ml-[2px] w-[7px] flex flex-col">
        <span class="h-[22px]"></span>
        <span class="h-[22px] flex items-center"><svg width="6" height="4"><use href="#dn"/></svg></span>
      </div>
      <div class="ml-[1px] w-[50px] flex flex-col items-center pt-[3px]">
        <svg width="34" height="32"><use href="#edge"/></svg>
        <span class="mt-[2px] leading-[20px] whitespace-nowrap">边倒圆</span>
        <svg width="6" height="4" class="mt-[2px]"><use href="#dn"/></svg>
      </div>
      <div class="ml-[1px] w-[18px] flex flex-col">
        <span class="h-[22px] flex items-center"><svg width="17" height="15"><use href="#chamf"/></svg></span>
        <span class="h-[22px] flex items-center"><svg width="17" height="14"><use href="#halves"/></svg></span>
        <span class="h-[22px] flex items-center"><svg width="17" height="15"><use href="#cone"/></svg></span>
      </div>
      <div class="ml-[12px] w-[38px] flex flex-col items-center pt-[3px]">
        <span class="w-[37px] h-[35px] border border-[#e8e8e8] rounded-[3px] flex items-center justify-center"><svg width="17" height="17"><use href="#morebox"/></svg></span>
        <span class="mt-[1px] leading-[20px]">更多</span>
        <svg width="6" height="4" class="mt-[2px]"><use href="#dn"/></svg>
      </div>
    </div>
    <div class="h-[20px] flex items-center text-[#1f7d92]">
      <span class="w-[180px] text-center">特征</span>
      <svg width="6" height="4" class="ml-[3px]"><use href="#dn"/></svg>
    </div>
  </div>
  <i class="w-px h-[84px] mt-[5px] bg-[#e0e0e0]"></i>
  <!-- 同步建模 -->
  <div class="w-[148px] shrink-0 flex flex-col">
    <div class="h-[74px] flex pt-px">
      <div class="w-[50px] ml-[5px] flex flex-col items-center pt-[3px]">
        <svg width="34" height="32"><use href="#moveface"/></svg>
        <span class="mt-[2px] leading-[20px] whitespace-nowrap">移动面</span>
      </div>
      <div class="ml-[1px] w-[25px] flex flex-col">
        <span class="h-[22px] flex items-center"><svg width="16" height="16"><use href="#mf1"/></svg></span>
        <span class="h-[22px] flex items-center"><svg width="16" height="16"><use href="#mf2"/></svg></span>
        <span class="h-[22px] flex items-center"><svg width="16" height="16"><use href="#mf4"/></svg></span>
      </div>
      <div class="w-[23px] flex flex-col">
        <span class="h-[22px] flex items-center"><svg width="16" height="16"><use href="#mf2"/></svg></span>
        <span class="h-[22px] flex items-center"><svg width="16" height="16"><use href="#mf3"/></svg></span>
      </div>
      <div class="ml-[2px] w-[38px] flex flex-col items-center pt-[3px]">
        <span class="w-[37px] h-[35px] border border-[#e8e8e8] rounded-[3px] flex items-center justify-center"><svg width="16" height="16"><use href="#refresh"/></svg></span>
        <span class="mt-[1px] leading-[20px]">更多</span>
        <svg width="6" height="4" class="mt-[2px]"><use href="#dn"/></svg>
      </div>
    </div>
    <div class="h-[20px] flex items-center text-[#1f7d92]">
      <span class="w-[132px] text-center">同步建模</span>
      <svg width="6" height="4" class="ml-[3px]"><use href="#dn"/></svg>
    </div>
  </div>
  <i class="w-px h-[84px] mt-[5px] bg-[#e0e0e0]"></i>
  <!-- 曲面 -->
  <div class="w-[42px] shrink-0 flex flex-col items-center pt-[7px]">
    <svg width="32" height="26"><use href="#surf"/></svg>
    <span class="mt-[6px] leading-[20px]">曲面</span>
    <svg width="6" height="4" class="mt-[2px]"><use href="#dn"/></svg>
  </div>
  <i class="w-px h-[84px] mt-[5px] bg-[#e0e0e0]"></i>
  <!-- 标准化工具 -->
  <div class="w-[103px] shrink-0 flex flex-col">
    <div class="h-[74px] pt-[6px] pl-[7px]">
      <div class="h-[31px] flex items-center gap-[7px]">
        <svg width="16" height="16"><use href="#frame"/></svg>
        <svg width="16" height="16"><use href="#layers"/></svg>
        <svg width="16" height="16"><use href="#db"/></svg>
        <i class="w-px h-[20px] bg-[#e4e4e4]"></i>
        <svg width="16" height="12" class="ml-[-1px]"><use href="#tag"/></svg>
      </div>
      <div class="h-[31px] flex items-center gap-[7px]">
        <svg width="16" height="16"><use href="#gchk"/></svg>
        <svg width="16" height="16"><use href="#gchk"/></svg>
        <svg width="16" height="16"><use href="#gchk"/></svg>
        <i class="w-px h-[20px] bg-[#e4e4e4]"></i>
        <svg width="16" height="16" class="ml-[-1px]"><use href="#std4"/></svg>
      </div>
    </div>
    <div class="h-[20px] flex items-center text-[#1f7d92] pl-[2px] whitespace-nowrap">
      <span class="w-[83px]">标准化工具 - G...</span>
      <svg width="6" height="4" class="ml-[5px]"><use href="#dn"/></svg>
    </div>
  </div>
  <i class="w-px h-[84px] mt-[5px] bg-[#e0e0e0]"></i>
  <!-- 齿轮 -->
  <div class="w-[51px] shrink-0 flex flex-col">
    <div class="h-[74px] pt-[6px] pl-[8px]">
      <div class="h-[31px] flex items-center gap-[7px]">
        <svg width="16" height="14"><use href="#gear1"/></svg>
        <svg width="16" height="14"><use href="#gear2"/></svg>
      </div>
      <div class="h-[31px] flex items-center">
        <svg width="16" height="14"><use href="#gear3"/></svg>
      </div>
    </div>
    <div class="h-[20px] flex items-center text-[#1f7d92] pl-[2px] whitespace-nowrap">
      <span class="w-[30px]">齿轮...</span>
      <svg width="6" height="4" class="ml-[6px]"><use href="#dn"/></svg>
    </div>
  </div>
  <i class="w-px h-[84px] mt-[5px] bg-[#e0e0e0]"></i>
  <!-- 弹簧 -->
  <div class="w-[57px] shrink-0 flex flex-col">
    <div class="h-[74px] pt-[6px] pl-[8px]">
      <div class="h-[31px] flex items-center gap-[7px]">
        <svg width="15" height="15"><use href="#spring"/></svg>
        <svg width="16" height="16"><use href="#spring2"/></svg>
      </div>
      <div class="h-[31px] flex items-center gap-[3px]">
        <svg width="15" height="16"><use href="#coil"/></svg>
        <i class="w-px h-[18px] bg-[#e4e4e4]"></i>
        <svg width="16" height="16" class="ml-[2px]"><use href="#xcoil"/></svg>
      </div>
    </div>
    <div class="h-[20px] flex items-center text-[#1f7d92] pl-[4px] whitespace-nowrap">
      <span class="w-[30px]">弹簧...</span>
      <svg width="6" height="4" class="ml-[9px]"><use href="#dn"/></svg>
    </div>
  </div>
  <i class="w-px h-[84px] mt-[5px] bg-[#e0e0e0]"></i>
  <!-- 加工 -->
  <div class="w-[51px] shrink-0 flex flex-col">
    <div class="h-[74px] pt-[6px] pl-[7px]">
      <div class="h-[31px] flex items-center gap-[8px]">
        <svg width="16" height="16"><use href="#mchk"/></svg>
        <svg width="16" height="16"><use href="#mbox"/></svg>
      </div>
      <div class="h-[31px] flex items-center gap-[8px]">
        <svg width="16" height="16"><use href="#mgrid"/></svg>
        <svg width="16" height="16"><use href="#csys"/></svg>
      </div>
    </div>
    <div class="h-[20px] flex items-center text-[#1f7d92] pl-[2px] whitespace-nowrap">
      <span class="w-[30px]">加工...</span>
      <svg width="6" height="4" class="ml-[6px]"><use href="#dn"/></svg>
    </div>
  </div>
  <i class="w-px h-[84px] mt-[5px] bg-[#e0e0e0]"></i>
  <!-- 建模工具 -->
  <div class="w-[97px] shrink-0 flex flex-col">
    <div class="h-[74px] pt-[6px] pl-[7px]">
      <div class="h-[31px] flex items-center">
        <svg width="16" height="16"><use href="#tri"/></svg>
        <svg width="16" height="16" class="ml-[10px]"><use href="#tbl"/></svg>
        <svg width="16" height="16" class="ml-[7px]"><use href="#fstar"/></svg>
        <svg width="16" height="16" class="ml-[6px]"><use href="#fgear"/></svg>
      </div>
      <div class="h-[31px] flex items-center">
        <svg width="16" height="16"><use href="#note"/></svg>
        <svg width="16" height="16" class="ml-[10px]"><use href="#dimbrush"/></svg>
        <i class="ml-[4px] w-px h-[18px] bg-[#e4e4e4]"></i>
        <span class="ml-[4px] text-[7px] leading-[8px] font-bold text-[#445] text-center">∞<br>10H7</span>
      </div>
    </div>
    <div class="h-[20px] flex items-center text-[#1f7d92] pl-[4px] whitespace-nowrap">
      <span class="w-[72px]">建模工具 - G...</span>
      <svg width="6" height="4" class="ml-[7px]"><use href="#dn"/></svg>
    </div>
  </div>
  <i class="w-px h-[84px] mt-[5px] bg-[#e0e0e0]"></i>
  <!-- ?.. -->
  <div class="w-[28px] shrink-0 flex flex-col">
    <div class="h-[74px] pt-[6px] pl-[7px]">
      <div class="h-[31px] flex items-center"><svg width="17" height="17"><use href="#cubes"/></svg></div>
      <div class="h-[31px] flex items-center"><svg width="17" height="17"><use href="#cubes"/></svg></div>
    </div>
    <div class="h-[20px] flex items-center text-[#1f7d92] pl-[2px]">
      <span class="w-[12px]">?..</span>
      <svg width="6" height="4" class="ml-[3px]"><use href="#dn"/></svg>
    </div>
  </div>
  <i class="w-px h-[84px] mt-[5px] bg-[#e0e0e0]"></i>
  <!-- 尺寸快速格式化工具 -->
  <div class="w-[287px] shrink-0 flex flex-col">
    <div class="h-[74px] pt-[6px] pl-[7px]">
      <div class="h-[31px] flex items-center">
        <svg width="18" height="16"><use href="#dim1"/></svg>
        <i class="ml-[5px] w-px h-[18px] bg-[#e4e4e4]"></i>
        <svg width="12" height="12" class="ml-[7px]"><use href="#bigx"/></svg>
        <span class="ml-[8px] w-[23px] text-[7px] leading-[8px] text-center text-[#3a4a8a]">1.00<br>±.05</span>
        <span class="w-[23px] text-[7px] leading-[8px] text-center text-[#3a4a8a]">1.00<br>±.88</span>
        <span class="w-[23px] text-[7px] leading-[8px] text-center text-[#3a4a8a]">1.00<br>±.88</span>
        <span class="w-[23px] text-[7px] leading-[8px] text-center text-[#3a4a8a]">1.00<br>±.88</span>
        <svg width="16" height="14" class="ml-[3px]"><use href="#boxx"/></svg>
        <svg width="18" height="16" class="ml-[6px]"><use href="#parx"/></svg>
        <span class="ml-[3px] w-[23px] text-[8px] leading-[8px] text-center text-[#3a4a8a] whitespace-nowrap">10H7</span>
        <span class="w-[23px] text-[7px] leading-[8px] text-center text-[#3a4a8a] whitespace-nowrap">10H7<br>[8.01]</span>
        <span class="w-[23px] text-[7px] leading-[8px] text-center text-[#3a4a8a] whitespace-nowrap">10H7<br>[8.01]</span>
        <span class="w-[23px] text-[7px] leading-[8px] text-center text-[#3a4a8a] whitespace-nowrap">10<br>[8.01]</span>
      </div>
      <div class="h-[31px] flex items-center">
        <svg width="18" height="16"><use href="#slash1"/></svg>
        <svg width="18" height="16" class="ml-[6px]"><use href="#slash2"/></svg>
        <i class="ml-[5px] w-px h-[18px] bg-[#e4e4e4]"></i>
        <svg width="16" height="16" class="ml-[7px]"><use href="#dia"/></svg>
        <svg width="16" height="16" class="ml-[6px]"><use href="#dia"/></svg>
        <svg width="12" height="10" class="ml-[8px]"><use href="#back"/></svg>
      </div>
    </div>
    <div class="h-[20px] flex items-center text-[#1f7d92] whitespace-nowrap">
      <span class="w-[272px] text-center">尺寸快速格式化工具 - GC工具箱</span>
      <svg width="6" height="4" class="ml-[1px]"><use href="#dn"/></svg>
    </div>
  </div>
  <i class="w-px h-[84px] mt-[5px] bg-[#e0e0e0]"></i>
  <!-- 可回滚 -->
  <div class="w-[41px] shrink-0 pl-[12px] pt-[5px] overflow-hidden">
    <svg width="32" height="32" class="ml-[8px]"><use href="#rollback"/></svg>
    <span class="block mt-[2px] leading-[20px] whitespace-nowrap">可回滚</span>
  </div>
</section>

<!-- selection bar -->
<section class="h-[33px] flex items-center bg-[#f7f7f7] border-b-2 border-[#a8a8a8]">
  <span class="ml-[11px]"><svg width="15" height="14"><use href="#menu"/></svg></span>
  <span class="ml-[5px] text-[#222] whitespace-nowrap">菜单(<u>M</u>)</span>
  <svg width="5" height="3" class="ml-[4px]"><use href="#dn"/></svg>
  <i class="ml-[6px] w-px h-[24px] bg-[#ddd]"></i>
  <div class="ml-[11px] w-[132px] h-[19px] border border-[#b0b0b0] bg-white flex items-center justify-between px-[3px] text-[#333]"><span>无选择过滤器</span><svg width="7" height="4" class="mr-[2px]"><use href="#dn"/></svg></div>
  <div class="ml-[10px] w-[139px] h-[19px] border border-[#b0b0b0] bg-white flex items-center justify-between px-[3px] text-[#333]"><span>整个装配</span><svg width="7" height="4" class="mr-[2px]"><use href="#dn"/></svg></div>
  <svg width="18" height="18" class="ml-[6px]"><use href="#gp1"/></svg>
  <svg width="18" height="18" class="ml-[10px]"><use href="#gp2"/></svg>
  <svg width="18" height="18" class="ml-[3px]"><use href="#selbox"/></svg>
  <svg width="5" height="3" class="ml-[5px]"><use href="#dn"/></svg>
  <svg width="18" height="18" class="ml-[10px]"><use href="#gp3"/></svg>
  <svg width="18" height="18" class="ml-[6px]"><use href="#gp4"/></svg>
  <svg width="16" height="14" class="ml-[8px]"><use href="#dash"/></svg>
  <svg width="5" height="3" class="ml-[8px]"><use href="#dn"/></svg>
  <svg width="17" height="15" class="ml-[8px]"><use href="#wire"/></svg>
  <svg width="17" height="17" class="ml-[8px]"><use href="#glass"/></svg>
  <span class="ml-[5px] w-[23px] h-[22px] bg-[#c6e0e8] flex items-center justify-center"><svg width="18" height="18"><use href="#snapall"/></svg></span>
  <span class="ml-[3px] w-[23px] h-[22px] bg-[#c6e0e8] flex items-center justify-center"><svg width="18" height="18"><use href="#lineA"/></svg></span>
  <span class="ml-px w-[23px] h-[22px] bg-[#c6e0e8] flex items-center justify-center"><svg width="18" height="18"><use href="#lineM"/></svg></span>
  <svg width="16" height="16" class="ml-[6px]"><use href="#scurve"/></svg>
  <span class="ml-[5px] w-[23px] h-[22px] bg-[#c6e0e8] flex items-center justify-center"><svg width="18" height="18"><use href="#poly"/></svg></span>
  <span class="ml-[3px] w-[23px] h-[22px] bg-[#c6e0e8] flex items-center justify-center"><svg width="18" height="18"><use href="#wave"/></svg></span>
  <svg width="18" height="18" class="ml-[3px]"><use href="#tang"/></svg>
  <span class="ml-[6px] w-[23px] h-[22px] bg-[#c6e0e8] flex items-center justify-center"><svg width="18" height="18"><use href="#circ"/></svg></span>
  <svg width="18" height="18" class="ml-[3px]"><use href="#circ2"/></svg>
  <span class="ml-[6px] w-[24px] h-[22px] bg-[#c6e0e8] flex items-center justify-center"><svg width="18" height="18"><use href="#cross"/></svg></span>
  <span class="w-[23px] h-[22px] bg-[#c6e0e8] flex items-center justify-center"><svg width="18" height="18"><use href="#lineM"/></svg></span>
  <svg width="18" height="18" class="ml-[4px]"><use href="#patch"/></svg>
  <svg width="16" height="16" class="ml-[8px]"><use href="#grid3"/></svg>
  <i class="ml-[11px] w-px h-[24px] bg-[#ddd]"></i>
  <svg width="18" height="18" class="ml-[11px]"><use href="#v1"/></svg>
  <svg width="18" height="18" class="ml-[6px]"><use href="#v2"/></svg>
  <svg width="18" height="18" class="ml-[7px]"><use href="#v3"/></svg>
  <svg width="16" height="16" class="ml-[9px]"><use href="#v4"/></svg>
  <svg width="5" height="3" class="ml-[8px]"><use href="#dn"/></svg>
  <svg width="18" height="16" class="ml-[6px]"><use href="#v5"/></svg>
  <svg width="5" height="3" class="ml-[7px]"><use href="#dn"/></svg>
  <svg width="17" height="17" class="ml-[9px]"><use href="#v6"/></svg>
  <svg width="5" height="3" class="ml-[7px]"><use href="#dn"/></svg>
  <svg width="17" height="17" class="ml-[7px]"><use href="#v7"/></svg>
  <svg width="5" height="3" class="ml-[7px]"><use href="#dn"/></svg>
  <i class="ml-[10px] w-px h-[24px] bg-[#ddd]"></i>
</section>

<!-- main -->
<main class="relative h-[650px] flex overflow-hidden">
  <!-- resource bar -->
  <aside class="w-[33px] shrink-0 bg-[#d4d4d4] border-l-2 border-[#4a4f55] border-r border-r-[#9c9c9c] flex flex-col items-center">
    <span class="h-[24px] mt-px flex items-center"><svg width="14" height="14"><use href="#gearS"/></svg></span>
    <span class="mt-[15px] h-[43px] flex items-center"><svg width="24" height="26"><use href="#navA"/></svg></span>
    <span class="h-[42px] flex items-center"><svg width="24" height="26"><use href="#navB"/></svg></span>
    <span class="ml-[3px] w-[30px] h-[46px] bg-white border-y border-l border-[#a8a8a8] flex items-center justify-center"><svg width="24" height="26"><use href="#navC"/></svg></span>
    <span class="h-[37px] flex items-center"><svg width="26" height="24"><use href="#navD"/></svg></span>
    <span class="mt-[12px] h-[42px] flex items-center"><svg width="26" height="26"><use href="#navE"/></svg></span>
    <span class="mt-[12px] h-[42px] flex items-center"><svg width="20" height="24"><use href="#navF"/></svg></span>
    <span class="mt-[11px] h-[44px] flex items-center"><svg width="23" height="23"><use href="#navG"/></svg></span>
    <span class="h-[42px] flex items-center"><svg width="21" height="25"><use href="#navH"/></svg></span>
    <span class="h-[44px] flex items-center"><svg width="23" height="23"><use href="#navI"/></svg></span>
    <span class="h-[37px] flex items-center"><svg width="22" height="24"><use href="#navJ"/></svg></span>
  </aside>

  <!-- part navigator -->
  <div class="w-[332px] shrink-0 flex flex-col border-r border-[#9c9c9c] bg-white">
    <div class="h-[28px] shrink-0 pl-[10px] pr-[16px] pb-[2px] flex items-center justify-between text-[#333]">
      <span>部件导航器</span>
      <span class="w-[12px] h-[10px] border border-[#222] border-t-2"></span>
    </div>
    <div class="relative ml-[7px] mr-[10px] flex-1 border-l border-t border-[#d8d8d8]">
      <div class="h-[20px] flex bg-[#eeeeee] border-b border-[#d8d8d8] leading-[19px] text-[#444]">
        <span class="w-[200px] pl-[7px] flex items-center gap-[12px] border-r border-[#d8d8d8]">名称<svg width="9" height="5" class="rotate-180"><use href="#dn"/></svg></span>
        <span class="w-[100px] pl-[7px] border-r border-[#d8d8d8]">最新</span>
        <span class="w-[12px] pl-[7px] overflow-hidden">阶</span>
      </div>
      <div class="h-[20px] flex border-b border-[#ececec] leading-[19px]"><span class="w-[200px] pl-[19px] flex items-center gap-[4px] border-r border-[#ececec]"><svg width="15" height="15"><use href="#clock"/></svg>历史记录模式</span></div>
      <div class="h-[20px] flex border-b border-[#ececec] leading-[19px] bg-[#fbfbfb]"><span class="w-[200px] pl-[19px] flex items-center gap-[4px] border-r border-[#ececec]"><svg width="15" height="15"><use href="#mview"/></svg>模型视图</span></div>
      <div class="h-[20px] flex border-b border-[#ececec] leading-[19px]"><span class="w-[200px] pl-[20px] flex items-center border-r border-[#ececec]"><svg width="14" height="13"><use href="#tick"/></svg><svg width="18" height="16"><use href="#camera"/></svg><span class="ml-[3px]">摄像机</span></span></div>
      <div class="h-[20px] flex border-b border-[#ececec] leading-[19px] bg-[#fbfbfb]"><span class="w-[200px] pl-[20px] flex items-center gap-[3px] border-r border-[#ececec]"><svg width="15" height="14"><use href="#folder"/></svg>模型历史记录</span></div>
      <div class="h-[20px] flex border-b border-[#ececec] leading-[19px]"><span class="w-[200px] pl-[40px] flex items-center border-r border-[#ececec]"><svg width="13" height="13"><use href="#box"/></svg><svg width="15" height="15" class="ml-px"><use href="#csys"/></svg><span class="ml-[5px]">基准坐标系 (0)</span></span><span class="w-[100px] pl-[6px] flex items-center"><svg width="14" height="13"><use href="#tick"/></svg></span></div>
      <div class="h-[20px] flex border-b border-[#ececec] leading-[19px] bg-[#fbfbfb]"><span class="w-[200px] pl-[40px] flex items-center border-r border-[#ececec]"><svg width="13" height="13"><use href="#box"/></svg><svg width="14" height="14" class="ml-[2px]"><use href="#cyl"/></svg><span class="ml-[5px]">圆柱 (1)</span></span><span class="w-[100px] pl-[6px] flex items-center"><svg width="14" height="13"><use href="#tick"/></svg></span></div>
      <div class="h-[20px] flex border-b border-[#ececec] leading-[19px]"><span class="w-[200px] pl-[40px] flex items-center border-r border-[#ececec]"><svg width="13" height="13"><use href="#box"/></svg><svg width="15" height="15" class="ml-px"><use href="#shell"/></svg><span class="ml-[5px]">壳 <b>(2)</b></span></span><span class="w-[100px] pl-[6px] flex items-center"><svg width="14" height="13"><use href="#tick"/></svg></span></div>
      <div id="empty-rows"></div>
      <div class="absolute left-[200px] top-[139px] bottom-0 w-px bg-[#ececec]"></div>
      <!-- tree connectors -->
      <svg class="absolute left-0 top-0" width="60" height="160" fill="none" stroke="#888" stroke-dasharray="1 1">
        <path d="M9.500 30v40M10 30h9M15 50h4M10 70h10M29 97v53M29 110h11M29 130h11M29 150h11"/>
      </svg>
      <span class="absolute left-[5px] top-[46px] w-[9px] h-[9px] bg-white border border-[#888] flex items-center justify-center text-[9px] leading-none text-black">+</span>
    </div>
  </div>

  <!-- graphics window -->
  <div class="relative flex-1 bg-linear-to-b from-[#b4b6b8] to-[#e8e9e9]">
    <svg width="860" height="650" viewBox="365 178 860 650">
      <path d="M597 280L485 697A119 49 16 0 0 714 756L823 341Z" fill="url(#gBody)" stroke="#4f3500" stroke-width="1"/>
      <ellipse cx="711" cy="305.500" rx="119" ry="44" transform="rotate(16 711 305.500)" fill="#fdbd10" stroke="#3c2a00" stroke-width="1"/>
      <ellipse cx="710.500" cy="306" rx="95.500" ry="35.500" transform="rotate(16 710.500 306)" fill="url(#gBore)" stroke="#3c2a00" stroke-width="1"/>
      <!-- watermark -->
      <path d="M967 726L1008 750V797L967 821L926 797V750Z" fill="#6a9fd6" stroke="#f4f6f8" stroke-width="3"/>
      <path d="M978 732L1007 750V796L967 820L945 808C935 795 945 792 950 790C975 800 990 780 985 762C985 750 982 740 978 732Z" fill="#70c4ec"/>
      <path d="M928 790C932 770 945 755 958 750M945 732C965 735 985 745 988 762M1006 770C1000 790 985 800 972 800" fill="none" stroke="#f4f6f8" stroke-width=".800"/>
      <path d="M967 751L986 762V785L967 796L948 785V762Z" fill="#6a9fd6" stroke="#fff" stroke-width="4"/>
      <path d="M967 758L980 765L967 773L954 765Z" fill="#6a9fd6"/>
      <path d="M967 773L980 765V782L967 790Z" fill="#70c4ec"/>
      <path d="M954 765L967 773V790M967 773L980 765" fill="none" stroke="#fff" stroke-width="1"/>
      <text x="1016" y="785" font-size="45" font-weight="700" fill="#76c6ec" stroke="#fff" stroke-width="1.500" paint-order="stroke" font-family="'Noto Sans CJK SC',sans-serif" textLength="202" lengthAdjust="spacingAndGlyphs">3D世界网</text>
      <text x="1020" y="802" font-size="14" font-weight="700" fill="#8ccdef" stroke="#fff" stroke-width="1" paint-order="stroke" font-family="'DejaVu Sans',sans-serif" textLength="194" lengthAdjust="spacing">WWW.3DSJW.COM</text>
    </svg>
  </div>

  <!-- annotation box -->
  <div class="absolute left-[48px] top-[87px] w-[239px] h-[119px] border-[6px] border-[#ee3333]"></div>
</main>

<script>
  // fill the navigator with blank rows down to the window edge
  var rows = document.getElementById('empty-rows');
  for (var i = 0; i < 24; i++) {
    var row = document.createElement('div');
    row.className = i % 2 ? 'h-[20px] border-b border-[#ececec] bg-[#fbfbfb]' : 'h-[20px] border-b border-[#ececec]';
    rows.appendChild(row);
  }
</script>
</body>
</html>
